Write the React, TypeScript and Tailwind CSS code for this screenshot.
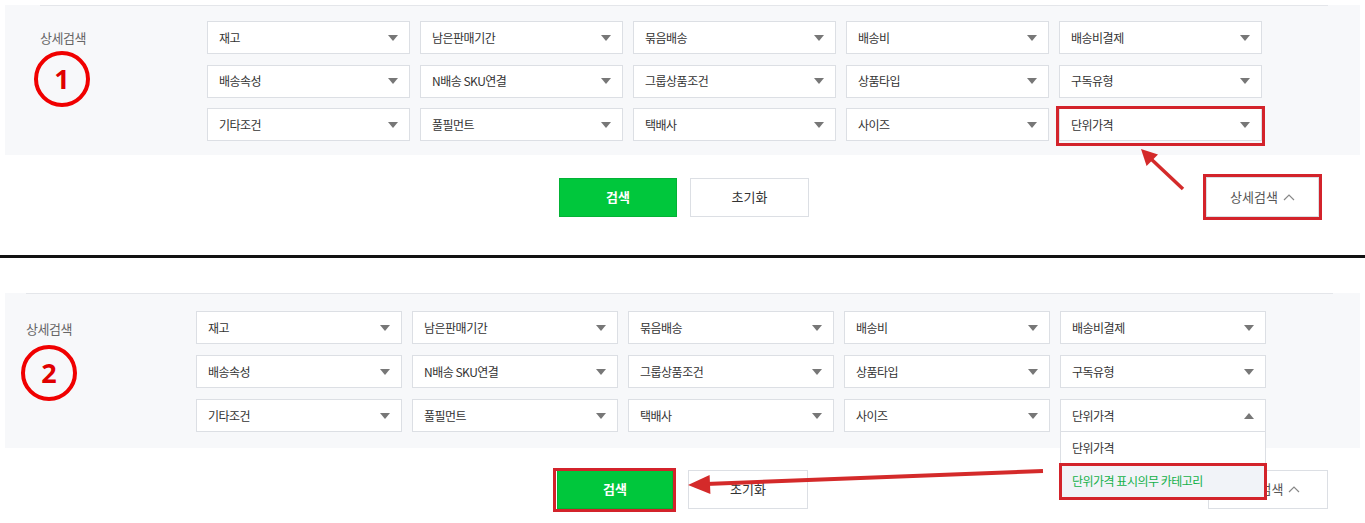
import React from "react";

const font = { fontFamily: '"Noto Sans CJK KR", "Noto Sans", sans-serif' };

function Caret({ up = false }: { up?: boolean }) {
  return (
    <svg width="10" height="6" viewBox="0 0 10 6" className="shrink-0">
      {up ? <path d="M0 6 L5 0 L10 6 Z" fill="#777" /> : <path d="M0 0 L10 0 L5 6 Z" fill="#777" />}
    </svg>
  );
}

function Select({ label, w, open = false, mark = false }: { label: string; w: string; open?: boolean; mark?: boolean }) {
  return (
    <div className={`relative ${w}`}>
      <div className="h-[33px] bg-white border border-[#dcdfe4] flex items-center justify-between pl-[11px] pr-[11px] text-[12px] text-[#333] tracking-[-0.5px]">
        <span>{label}</span>
        <Caret up={open} />
      </div>
      {mark && <div className="absolute -left-[3px] -right-[3px] -top-[2px] -bottom-[5px] border-[3px] border-[#d3232b]" />}
      {open && (
        <div className="absolute left-0 right-0 top-full z-10 bg-white border border-t-0 border-[#dcdfe4] text-[12px] tracking-[-0.5px]">
          <div className="h-[32px] flex items-center pl-[11px] text-[#333]">단위가격</div>
          <div className="relative h-[34px] flex items-center pl-[11px] bg-[#f1f3f8] text-[#14b14a]">
            단위가격 표시의무 카테고리
            <div className="absolute -left-[2px] -right-[2px] -top-[1px] -bottom-[2px] border-[3px] border-[#d3232b]" />
          </div>
        </div>
      )}
    </div>
  );
}

const rows = [
  ["재고", "남은판매기간", "묶음배송", "배송비", "배송비결제"],
  ["배송속성", "N배송 SKU연결", "그룹상품조건", "상품타입", "구독유형"],
  ["기타조건", "풀필먼트", "택배사", "사이즈", "단위가격"],
];

function Chevron() {
  return (
    <svg width="12" height="8" viewBox="0 0 12 8" className="ml-[5px]">
      <path d="M1 7 L6 2 L11 7" fill="none" stroke="#888" strokeWidth="1.2" />
    </svg>
  );
}

export default function App() {
  return (
    <div className="relative w-[1365px] h-[523px] overflow-hidden bg-white" style={font}>
      {/* Panel 1 */}
      <div className="pt-[5px] px-[5px]">
        <div className="w-[1355px] bg-[#f7f8fa] pb-[14px]">
          <div className="ml-[35px] w-[1288px] h-px bg-[#e4e6ea]" />
          <div className="flex mt-[15px]">
            <div className="w-[202px] pl-[35px] pt-[7px] text-[13px] text-[#666] tracking-[-0.5px]">상세검색</div>
            <div className="grid grid-cols-[repeat(5,203px)] gap-x-[10px] gap-y-[10.5px]">
              {rows.flatMap((r, i) =>
                r.map((l, j) => <Select key={`${i}-${j}`} label={l} w="w-[203px]" mark={i === 2 && j === 4} />)
              )}
            </div>
          </div>
        </div>
      </div>
      <div className="grid grid-cols-[1fr_auto_1fr] items-center mt-[22px] h-[40px]">
        <div />
        <div className="flex gap-[13px] pl-[3px]">
          <button className="w-[118px] h-[39px] bg-[#00c73c] border border-[#03b236] text-white text-[13px] font-bold">검색</button>
          <button className="w-[119px] h-[39px] bg-white border border-[#dcdfe4] text-[#333] text-[13px]">초기화</button>
        </div>
        <div className="flex justify-end pr-[46px]">
          <div className="relative">
            <button className="w-[113px] h-[40px] bg-white border border-[#dcdfe4] text-[#555] text-[13px] flex items-center justify-center">
              상세검색<Chevron />
            </button>
            <div className="absolute -inset-[3px] border-[3px] border-[#d3232b]" />
          </div>
        </div>
      </div>
      <div className="mt-[38px] h-[3px] bg-[#111]" />

      {/* Panel 2 */}
      <div className="mt-[35px] px-[5px]">
        <div className="w-[1355px] bg-[#f7f8fa] pb-[16px]">
          <div className="ml-[21px] w-[1307px] h-px bg-[#e4e6ea]" />
          <div className="flex mt-[17px]">
            <div className="w-[191px] pl-[21px] pt-[8px] text-[13px] text-[#666] tracking-[-0.5px]">상세검색</div>
            <div className="grid grid-cols-[repeat(5,206px)] gap-x-[10px] gap-y-[11px]">
              {rows.flatMap((r, i) =>
                r.map((l, j) => <Select key={`${i}-${j}`} label={l} w="w-[206px]" open={i === 2 && j === 4} />)
              )}
            </div>
          </div>
        </div>
      </div>
      <div className="grid grid-cols-[1fr_auto_1fr] items-center mt-[21px] h-[40px]">
        <div />
        <div className="flex gap-[15px] items-center">
          <div className="relative">
            <button className="w-[116px] h-[39px] bg-[#00c73c] border border-[#03b236] text-white text-[13px] font-bold">검색</button>
            <div className="absolute -left-[4px] -right-[3px] -top-[2px] -bottom-[3px] border-[3px] border-[#d3232b]" />
          </div>
          <button className="w-[120px] h-[39px] bg-white border border-[#dcdfe4] text-[#333] text-[13px]">초기화</button>
        </div>
        <div className="flex justify-end pr-[37px]">
          <button className="w-[120px] h-[39px] bg-white border border-[#dcdfe4] text-[#555] text-[13px] flex items-center justify-center">
            상세검색<Chevron />
          </button>
        </div>
      </div>

      {/* Annotations */}
      <div className="absolute left-[34px] top-[51px] w-[56px] h-[56px] rounded-full border-[4px] border-[#f00000] flex items-center justify-center text-[#e00000] text-[27px] font-bold" style={{ fontFamily: '"Open Sans", sans-serif' }}>1</div>
      <div className="absolute left-[21px] top-[345px] w-[56px] h-[56px] rounded-full border-[4px] border-[#f00000] flex items-center justify-center text-[#e00000] text-[27px] font-bold" style={{ fontFamily: '"Open Sans", sans-serif' }}>2</div>
      <svg className="absolute inset-0 pointer-events-none z-20" width="1365" height="523" viewBox="0 0 1365 523">
        <line x1="1183" y1="189" x2="1150" y2="158" stroke="#d42a2a" strokeWidth="3.5" />
        <polygon points="1141,149 1158,154.6 1146.6,166" fill="#d42a2a" />
        <line x1="1043" y1="471" x2="706" y2="484" stroke="#d42a2a" strokeWidth="4" />
        <polygon points="688,485 710.4,494 709.6,475" fill="#d42a2a" />
      </svg>
    </div>
  );
}
